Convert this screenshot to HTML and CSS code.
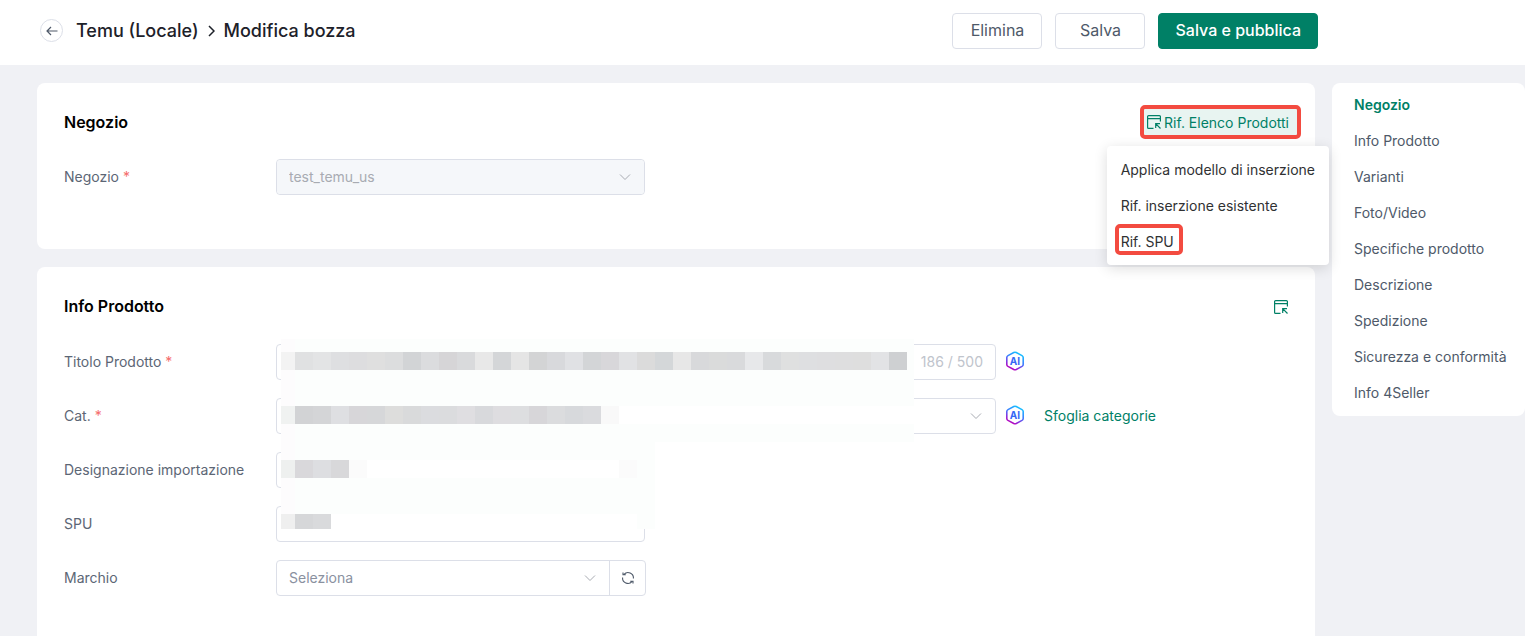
FILE: index.html
```html
<!DOCTYPE html>
<html lang="it">
<head>
  <meta charset="UTF-8">
  <meta name="viewport" content="width=device-width, initial-scale=1.0">
  <title>Modifica bozza</title>
  <link rel="stylesheet" href="styles.css">
</head>
<body>
  <!-- shared icons -->
  <svg class="sprite" aria-hidden="true">
    <defs>
      <linearGradient id="ai-fill" x1="0.75" y1="0" x2="0.25" y2="1">
        <stop offset="0" stop-color="#12c8ff"/>
        <stop offset="0.45" stop-color="#3f7dff"/>
        <stop offset="0.75" stop-color="#8a30dd"/>
        <stop offset="1" stop-color="#c400b8"/>
      </linearGradient>
    </defs>
    <symbol id="icon-ref" viewBox="0 0 14 14">
      <path d="M13.4 6.5V1.6a1 1 0 0 0-1-1H1.6a1 1 0 0 0-1 1v10.8a1 1 0 0 0 1 1H6.500M.6 3.700h12.800M8.700 13V8.700H13M8.900 8.900l4.600 4.600" fill="none" stroke="currentColor" stroke-width="1.200"/>
    </symbol>
    <symbol id="icon-down" viewBox="0 0 12 12">
      <path d="M1 3.500l5 5 5-5" fill="none" stroke="currentColor"/>
    </symbol>
    <symbol id="icon-hexagon" viewBox="0 0 20 20">
      <path d="M8.800 1.500Q10 .9 11.200 1.500L17 4.600Q18.200 5.300 18.200 6.600V13.400Q18.200 14.700 17 15.400L11.200 18.500Q10 19.100 8.800 18.500L3 15.400Q1.800 14.700 1.800 13.400V6.600Q1.800 5.300 3 4.600Z" fill="none" stroke="url(#ai-fill)" stroke-width="1.600"/>
    </symbol>
  </svg>

  <header>
    <div class="breadcrumb">
      <button class="back" aria-label="Indietro">
        <svg width="12" height="12" viewBox="0 0 12 12"><path d="M11.500 6H1M5 2L1 6l4 4" fill="none" stroke="currentColor" stroke-width="1.200"/></svg>
      </button>
      <span>Temu (Locale)</span>
      <svg class="sep" width="7" height="12" viewBox="0 0 7 12"><path d="M1 1l5 5-5 5" fill="none" stroke="currentColor" stroke-width="1.500"/></svg>
      <span>Modifica bozza</span>
    </div>
    <div class="actions">
      <button class="btn">Elimina</button>
      <button class="btn">Salva</button>
      <button class="btn primary">Salva e pubblica</button>
    </div>
  </header>

  <div class="layout">
    <main>
      <section class="card">
        <div class="card-head">
          <h2>Negozio</h2>
          <div class="dropdown">
            <button class="ref-btn"><svg width="14" height="14"><use href="#icon-ref"/></svg>Rif. Elenco Prodotti</button>
            <ul class="menu">
              <li><button>Applica modello di inserzione</button></li>
              <li><button>Rif. inserzione esistente</button></li>
              <li class="marked"><button>Rif. SPU</button></li>
            </ul>
          </div>
        </div>
        <div class="field">
          <label for="shop">Negozio <em>*</em></label>
          <div class="control">
            <select id="shop" disabled><option>test_temu_us</option></select>
            <svg class="arrow" width="12" height="12"><use href="#icon-down"/></svg>
          </div>
        </div>
      </section>

      <section class="card grow">
        <div class="card-head">
          <h2>Info Prodotto</h2>
          <button class="icon-btn" aria-label="Rif. Elenco Prodotti"><svg width="14" height="14"><use href="#icon-ref"/></svg></button>
        </div>
        <div class="fields">
          <div class="field">
            <label for="title">Titolo Prodotto <em>*</em></label>
            <div class="control wide">
              <input id="title" type="text">
              <span class="counter">186 / 500</span>
            </div>
            <button class="ai"><svg width="20" height="20"><use href="#icon-hexagon"/></svg><span>AI</span></button>
          </div>
          <div class="field">
            <label for="cat">Cat. <em>*</em></label>
            <div class="control wide">
              <select id="cat"><option></option></select>
              <svg class="arrow" width="12" height="12"><use href="#icon-down"/></svg>
            </div>
            <button class="ai"><svg width="20" height="20"><use href="#icon-hexagon"/></svg><span>AI</span></button>
            <a class="browse" href="#">Sfoglia categorie</a>
          </div>
          <div class="field">
            <label for="import">Designazione importazione</label>
            <div class="control"><input id="import" type="text"></div>
          </div>
          <div class="field">
            <label for="spu">SPU</label>
            <div class="control"><input id="spu" type="text"></div>
          </div>
          <div class="field">
            <label for="brand">Marchio</label>
            <div class="control with-button">
              <select id="brand"><option>Seleziona</option></select>
              <svg class="arrow" width="12" height="12"><use href="#icon-down"/></svg>
              <button class="refresh" aria-label="Aggiorna">
                <svg width="14" height="14" viewBox="0 0 14 14"><path d="M2 4.300V1.500M2 3.800h2.800M3 3.400A5.400 5.400 0 0 1 12.400 7.500M12 9.700v2.800M12 10.200H9.200M11 10.600A5.400 5.400 0 0 1 1.600 6.500" fill="none" stroke="currentColor" stroke-width="1.100"/></svg>
              </button>
            </div>
          </div>

          <!-- mosaic that hides the private values -->
          <svg class="mosaic" id="mosaic" width="633" height="190" aria-hidden="true">
            <path d="M0 0H633V103H374V190H0Z" fill="#fcfefd"/>
            <path d="M0 0H14V190H0Z" fill="#fdfcfd"/>
            <path d="M14 67H633V85H14ZM14 121H338V139H14ZM14 175H356V190H14Z" fill="#fff"/>
            <path d="M338 121H356V139H338Z" fill="#fbfbfb"/>
          </svg>
        </div>
      </section>
    </main>

    <nav>
      <a class="active" href="#">Negozio</a>
      <a href="#">Info Prodotto</a>
      <a href="#">Varianti</a>
      <a href="#">Foto/Video</a>
      <a href="#">Specifiche prodotto</a>
      <a href="#">Descrizione</a>
      <a href="#">Spedizione</a>
      <a href="#">Sicurezza e conformità</a>
      <a href="#">Info 4Seller</a>
    </nav>
  </div>

  <script src="mosaic.js"></script>
</body>
</html>
```
FILE: styles.css
```css
*, *::after {
  box-sizing: border-box;
}

body {
  margin: 0;
  min-height: 100vh;
  display: flex;
  flex-direction: column;
  font-family: Inter, 'Liberation Sans', sans-serif;
  font-size: 14px;
  color: #4e5969;
  background-color: #f0f1f5;
}

button, input, select {
  font: inherit;
  color: inherit;
  margin: 0;
}

button {
  padding: 0;
  border: none;
  background: none;
  cursor: pointer;
}

a {
  color: inherit;
  text-decoration: none;
}

svg {
  display: block;
  flex-shrink: 0;
}

.sprite {
  position: absolute;
  width: 0;
  height: 0;
}

/* Header */
header {
  display: flex;
  justify-content: space-between;
  align-items: center;
  height: 65px;
  padding: 0 207px 4px 40px;
  background-color: #fff;
}

.breadcrumb {
  display: flex;
  align-items: center;
  font-size: 18px;
  font-weight: 500;
  color: #1d2129;
}

.back {
  display: flex;
  align-items: center;
  justify-content: center;
  width: 23px;
  height: 23px;
  margin-right: 13px;
  border: 1px solid #dcdfe8;
  border-radius: 50%;
  color: #4e5969;
}

.sep {
  margin: 0 9px;
}

.actions {
  display: flex;
  gap: 13px;
}

.btn {
  min-width: 90px;
  height: 36px;
  padding: 0 16px 2px;
  border: 1px solid #dcdfe8;
  border-radius: 4px;
  background-color: #fff;
  font-size: 16px;
}

.btn.primary {
  border-color: #008066;
  background-color: #008066;
  color: #fff;
  font-weight: 500;
}

/* Page layout */
.layout {
  flex: 1;
  display: flex;
  gap: 17px;
  padding: 18px 0 0 37px;
}

main {
  flex: 1;
  display: flex;
  flex-direction: column;
  gap: 18px;
}

.card {
  padding: 22px 14px 36px 27px;
  border-radius: 8px;
  background-color: #fff;
}

.card.grow {
  flex: 1;
  padding-bottom: 22px;
  border-radius: 8px 8px 0 0;
}

.card-head {
  display: flex;
  justify-content: space-between;
  align-items: center;
  height: 34px;
  margin-bottom: 20px;
}

.grow .card-head {
  margin-bottom: 21px;
}

.card-head h2 {
  margin: 0;
  font-size: 16px;
  font-weight: 600;
  color: #000;
}

.icon-btn {
  margin-right: 13px;
  padding-top: 2px;
  color: #008066;
}

/* Reference dropdown */
.dropdown {
  position: relative;
}

.ref-btn {
  display: flex;
  align-items: center;
  gap: 3px;
  height: 34px;
  padding: 0 8px 0 3px;
  border: 4px solid #f34b40;
  border-radius: 5px;
  background-color: #e8f4f1;
  color: #008066;
}

.menu {
  position: absolute;
  top: 41px;
  right: -28px;
  z-index: 2;
  margin: 0;
  padding: 6px 0 5px;
  list-style: none;
  border-radius: 4px;
  background-color: #fff;
  box-shadow: 0 3px 14px rgba(0, 0, 0, 0.14);
}

.menu button {
  width: 100%;
  height: 36px;
  padding: 0 14px 2px;
  text-align: left;
  white-space: nowrap;
  color: #303133;
}

.marked {
  position: relative;
}

.marked::after {
  content: "";
  position: absolute;
  top: 0;
  left: 8px;
  width: 68px;
  height: 31px;
  border: 4px solid #f34b40;
  border-radius: 5px;
}

/* Form */
.fields {
  position: relative;
}

.field {
  display: flex;
  align-items: center;
  margin-bottom: 18px;
}

.field label {
  width: 212px;
  padding-bottom: 2px;
  color: #5c6675;
}

.field em {
  font-style: normal;
  color: #f56c6c;
}

.control {
  position: relative;
  display: flex;
  align-items: center;
  width: 369px;
  height: 36px;
  border: 1px solid #dcdfe8;
  border-radius: 4px;
  background-color: #fff;
}

.control.wide {
  width: 720px;
}

.control input,
.control select {
  flex: 1;
  min-width: 0;
  height: 100%;
  padding: 0 12px 2px;
  border: none;
  border-radius: 4px;
  outline: none;
  background: none;
  appearance: none;
  color: #8a919f;
}

.control select:disabled {
  background-color: #f5f7fa;
  color: #a8abb2;
  opacity: 1;
}

.arrow {
  position: absolute;
  right: 13px;
  color: #a8abb2;
  pointer-events: none;
}

.with-button {
  width: 370px;
}

.with-button .arrow {
  right: 49px;
}

.refresh {
  display: flex;
  align-items: center;
  justify-content: center;
  width: 36px;
  height: 100%;
  border-left: 1px solid #dcdfe8;
}

.counter {
  padding: 0 12px 2px 0;
  color: #c0c4cc;
}

.ai {
  position: relative;
  display: flex;
  align-items: flex-start;
  height: 22px;
  margin-left: 9px;
}

.ai span {
  position: absolute;
  inset: 0;
  line-height: 20px;
  font-size: 10px;
  font-weight: 700;
  color: #3567f5;
}

.browse {
  margin-left: 19px;
  padding-bottom: 2px;
  color: #008066;
}

.mosaic {
  position: absolute;
  top: -5px;
  left: 217px;
}

/* Section links */
nav {
  align-self: flex-start;
  display: flex;
  flex-direction: column;
  width: 193px;
  padding: 4px 0 5px 22px;
  border-radius: 8px;
  background-color: #fff;
}

nav a {
  line-height: 36px;
}

nav .active {
  color: #008066;
  font-weight: 600;
}
```
FILE: mosaic.js
```js
// one row per hidden value; the first cell is 14px wide, the others 18px
const rows = [
  { y: 13, h: 18, cells: '#f3f3f3 #e0e1e2 #e3e4e5 #dedfe1 #dddddf #dfdfdf #dcddde #d2d4d6 #dbdcde #d6d5d7 #d9dadc #e8e8e8 #d4d6d8 #e5e5e5 #d3d4d5 #d8d9dc #e0e1e4 #d3d5d7 #d8d7da #e1e2e4 #dbdbdb #d4d7d9 #e7e7e7 #d8d9db #dadbdb #d9dadc #e7e8ea #d8dadc #dfe0e0 #dedfe1 #dedee0 #dededf #dedede #e2e3e5 #ced0d2' },
  { y: 67, h: 18, cells: '#f0f2f1 #d2d3d5 #d4d5d7 #dedfe2 #d7d6d9 #d6d7d9 #dddddc #d9dadb #dbdcdf #dbdcde #dfdee1 #d8d9dc #dedde0 #dddee0 #d7d6d9 #dbdcde #d7d9dc #dadbde #f9f9f9' },
  { y: 121, h: 18, cells: '#eef0ef #d9d8db #dddee1 #d8d8da #fbfbfb' },
  { y: 175, h: 15, cells: '#efefef #d6d7d9 #d9dadc' }
];

const mosaic = document.getElementById('mosaic');
rows.forEach(row => {
  row.cells.split(' ').forEach((color, i) => {
    const rect = document.createElementNS('http://www.w3.org/2000/svg', 'rect');
    rect.setAttribute('x', i === 0 ? 0 : 14 + (i - 1) * 18);
    rect.setAttribute('y', row.y);
    rect.setAttribute('width', i === 0 ? 14 : 18);
    rect.setAttribute('height', row.h);
    rect.setAttribute('fill', color);
    mosaic.appendChild(rect);
  });
});
```
